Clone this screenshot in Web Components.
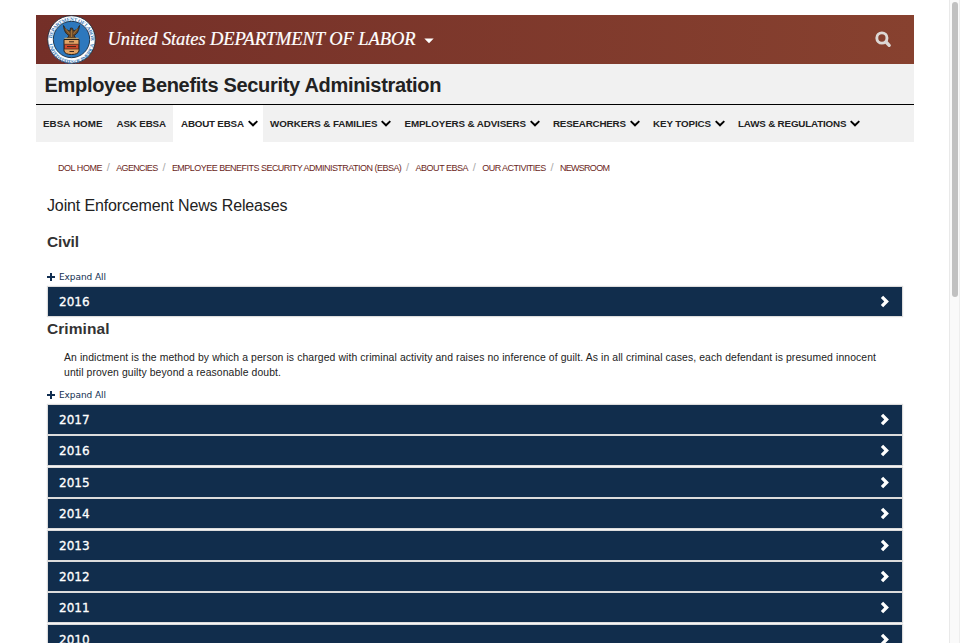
<!DOCTYPE html>
<html lang="en">
<head>
<meta charset="utf-8">
<title>Joint Enforcement News Releases</title>
<style>
html,body{margin:0;height:643px;overflow:hidden;background:#fff;font-family:"Liberation Sans",Arial,sans-serif;color:#222}
</style>
</head>
<body>
<ebsa-page></ebsa-page>
<script>
const define=(name,html,ready)=>{
  const t=document.createElement('template');
  t.innerHTML=html;
  customElements.define(name,class extends HTMLElement{
    constructor(){super();this.attachShadow({mode:'open'}).append(t.content.cloneNode(true));}
    connectedCallback(){if(ready)ready(this,this.shadowRoot);}
  });
};

/* One line of text, tracked so that it fills the given width. */
define('text-run','<style>:host{display:block;white-space:nowrap;flex:none}span{display:inline-block}</style><span><slot></slot></span>',(el,r)=>{
  const w=+el.getAttribute('w'),s=r.querySelector('span');
  el.style.width=w+'px';
  s.style.letterSpacing='0';
  s.style.letterSpacing=((w-s.getBoundingClientRect().width)/(el.textContent.trim().length-1))+'px';
});

define('dol-seal',`<style>:host{display:block;width:49px;height:49px;flex:none}svg{display:block}text{font:bold 5.3px "Liberation Serif",serif;fill:#3d7cb8}</style>
<svg width="49" height="49" viewBox="0 0 49 49">
<defs><path id="top" d="M5.2 27.5A19.4 19.4 0 1 1 43.8 27.5"/><path id="bot" d="M1.7 26A22.8 22.8 0 0 0 47.3 26"/></defs>
<circle cx="24.5" cy="24.5" r="23.8" fill="#fff" stroke="#1d2b3c" stroke-width=".9"/>
<circle cx="24.5" cy="24.5" r="18.2" fill="#2d78bd" stroke="#182a3d" stroke-width=".9"/>
<text><textPath href="#top" startOffset="4" textLength="59">DEPARTMENT OF LABOR</textPath></text>
<text><textPath href="#bot" startOffset="3" textLength="65">UNITED STATES OF AMERICA</textPath></text>
<path d="M16.5 10.5C17 16 19 19 22 20.5L20.5 23H28.5L27 20.5C30 19 32 16 32.5 10.5C31 14 28.5 15.5 26.5 16L25.5 13.2L23.5 13L23 16C20.5 15.5 18 14 16.5 10.5Z" fill="#6b4a2a" stroke="#282520" stroke-width=".9"/>
<path d="M18.5 13.5L22.5 19M30.5 13.5L26.5 19M24.5 15V22" stroke="#b6843f" stroke-width=".7"/>
<path d="M17 24.5H32V36Q31 39.5 24.5 39.5Q18 39.5 17 36Z" fill="#e2a365" stroke="#28211b" stroke-width="1"/>
<path d="M17.5 29.3H31.5V34H17.5Z" fill="#d34a2c" stroke="#3c211b" stroke-width=".7"/>
<path d="M20 31.6H29M22 26.8H27M22.5 36.5H27" stroke="#3a241b" stroke-width="1"/>
<path d="M17.5 23.3H31.5" stroke="#d9a95f" stroke-width="1"/>
</svg>`);

define('dol-banner',`<style>
:host{display:flex;height:49px;padding:0 21.5px 0 11px;align-items:center;background:linear-gradient(90deg,#742f28,#87412f);color:#fff;box-sizing:border-box}
text-run{font:italic 18.5px/49px "Liberation Serif",Georgia,serif;margin-left:11.5px;-webkit-text-stroke:.2px #fff}
.caret{margin:3px auto 0 8px}svg{display:block;flex:none}
</style>
<dol-seal></dol-seal><text-run w="308">United States DEPARTMENT OF LABOR</text-run>
<svg class="caret" width="10" height="6" viewBox="0 0 10 6"><path d="M.3 .5H9.7L5 5.2Z" fill="#fff"/></svg>
<svg width="17" height="17" viewBox="0 0 17 17"><circle cx="6.9" cy="7" r="5.1" fill="none" stroke="#ddd8d5" stroke-width="2.9"/><path d="M11 11L14.2 14.3" stroke="#ddd8d5" stroke-width="3.3" stroke-linecap="round"/></svg>`);

define('agency-title',`<style>:host{display:block;height:40px;padding-left:8.5px;background:#f1f1f1;border-bottom:1px solid #000}
text-run{font-weight:bold;font-size:20px;line-height:42px}</style><text-run w="397">Employee Benefits Security Administration</text-run>`);

define('nav-item',`<style>:host{display:flex;height:37px;align-items:center;flex:none;gap:3.5px;box-sizing:border-box;padding:0 7px;font-weight:bold;font-size:9.8px;line-height:38px}
:host([menu]){padding-right:6.5px}
:host([active]){background:#fff;padding-left:8px;padding-right:5.5px}
svg{display:none}:host([menu]) svg{display:block}</style>
<slot></slot><svg width="10" height="7" viewBox="0 0 10 7"><path d="M.7 1.1L5 5.3L9.3 1.1" fill="none" stroke="#000" stroke-width="1.9"/></svg>`);

define('main-nav',`<style>:host{display:flex;height:37px;background:#f1f1f1}</style>
<nav-item><text-run w="59.5">EBSA HOME</text-run></nav-item>
<nav-item><text-run w="49.5">ASK EBSA</text-run></nav-item>
<nav-item active menu><text-run w="63">ABOUT EBSA</text-run></nav-item>
<nav-item menu><text-run w="107.5">WORKERS &amp; FAMILIES</text-run></nav-item>
<nav-item menu><text-run w="121.5">EMPLOYERS &amp; ADVISERS</text-run></nav-item>
<nav-item menu><text-run w="73">RESEARCHERS</text-run></nav-item>
<nav-item menu><text-run w="58">KEY TOPICS</text-run></nav-item>
<nav-item menu><text-run w="108.5">LAWS &amp; REGULATIONS</text-run></nav-item>`);

define('bread-crumbs',`<style>:host{display:flex;height:14px;line-height:14px;padding:19px 0 0 22px;font-size:9px;color:#6b1f1b}
i{font-style:normal;color:#aaa;width:13.7px;flex:none;text-indent:4.2px;font-size:11px;line-height:13px}</style>
<text-run w="44.5">DOL HOME</text-run><i>/</i><text-run w="42">AGENCIES</text-run><i>/</i><text-run w="230">EMPLOYEE BENEFITS SECURITY ADMINISTRATION (EBSA)</text-run><i>/</i><text-run w="53">ABOUT EBSA</text-run><i>/</i><text-run w="64">OUR ACTIVITIES</text-run><i>/</i><text-run w="50">NEWSROOM</text-run>`);

define('expand-all',`<style>:host{display:flex;height:16px;align-items:center;gap:4px;color:#112e51;font:9px/16px "DejaVu Sans",Verdana,sans-serif}</style>
<svg width="8" height="8" viewBox="0 0 8 8"><path d="M4 0V8M0 4H8" stroke="#112e51" stroke-width="2"/></svg><text-run w="47">Expand All</text-run>`);

define('year-bar',`<style>:host{display:flex;height:29px;width:853.5px;box-sizing:border-box;margin:0 0 2.4px 1px;padding:0 11.5px 0 11px;align-items:center;justify-content:space-between;background:#112d4c;box-shadow:0 0 1px 1px #dcdcdc;color:#fff;font:12px/29px "DejaVu Sans",Verdana,sans-serif;-webkit-text-stroke:.3px #fff}
text-run{padding-top:2px}</style>
<text-run w="30.5"><slot></slot></text-run><svg width="10" height="13" viewBox="0 0 10 13"><path d="M2 1.9L6.6 6.5L2 11.1" fill="none" stroke="#fff" stroke-width="3.3"/></svg>`,(el,r)=>{r.querySelector('text-run').style.letterSpacing='0'});

define('news-content',`<style>:host{display:block;padding-left:11px}
h1,h2,p{margin:0;font-weight:normal}
h1{font-size:16px;line-height:20px;padding-top:21px}
h2{font-size:15.5px;color:#333;line-height:20px;font-weight:bold}
.civil{padding:16px 0 17px}
.criminal{margin-top:3px}
p{padding:11px 0 0 17px;font-size:10.4px;line-height:15px}
.one{margin-bottom:2px}.two{margin:6.5px 0 2.5px}
</style>
<h1><text-run w="240.5">Joint Enforcement News Releases</text-run></h1>
<h2 class="civil"><text-run w="32">Civil</text-run></h2>
<expand-all class="one"></expand-all><year-bar>2016</year-bar>
<h2 class="criminal"><text-run w="62.5">Criminal</text-run></h2>
<p><text-run w="812">An indictment is the method by which a person is charged with criminal activity and raises no inference of guilt. As in all criminal cases, each defendant is presumed innocent</text-run><text-run w="217">until proven guilty beyond a reasonable doubt.</text-run></p>
<expand-all class="two"></expand-all>
<year-bar>2017</year-bar><year-bar>2016</year-bar><year-bar>2015</year-bar><year-bar>2014</year-bar><year-bar>2013</year-bar><year-bar>2012</year-bar><year-bar>2011</year-bar><year-bar>2010</year-bar>`);

define('scroll-track',`<style>:host{display:block;width:11px;box-sizing:border-box;border-left:1px solid #e9e9e9;border-right:1px solid #eee;background:#fafafa;padding:2px 0 0 2px}
div{width:6px;height:295px;border-radius:3px;background:#c1c1c1}</style><div></div>`);

define('ebsa-page',`<style>:host{display:flex;justify-content:space-between;height:643px;overflow:hidden}
main{width:877.5px;margin:15px 0 0 36px}</style>
<main><dol-banner></dol-banner><agency-title></agency-title><main-nav></main-nav><bread-crumbs></bread-crumbs><news-content></news-content></main><scroll-track></scroll-track>`);
</script>
</body>
</html>
